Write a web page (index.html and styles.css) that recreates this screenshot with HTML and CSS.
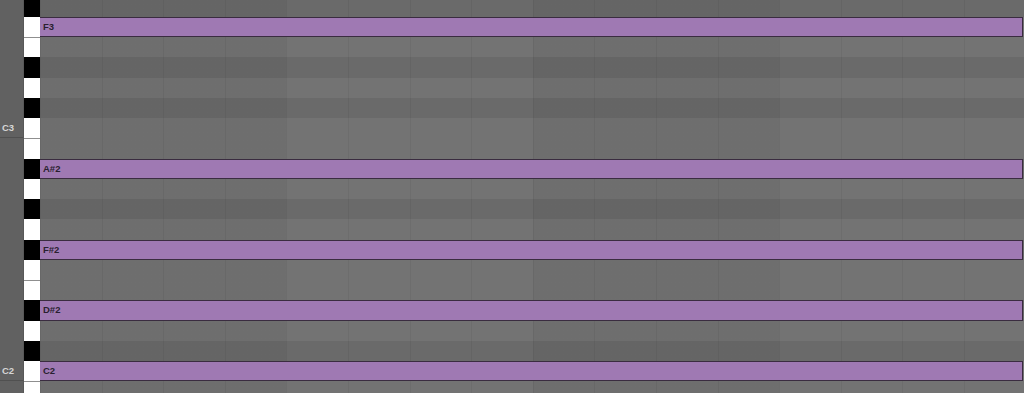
FILE: index.html
```html
<!DOCTYPE html>
<html>
<head>
<meta charset="utf-8">
<link rel="stylesheet" href="styles.css">
</head>
<body>
<div class="roll">
  <div class="labels">
    <div class="lrow"></div>
    <div class="lrow"></div>
    <div class="lrow"></div>
    <div class="lrow"></div>
    <div class="lrow"></div>
    <div class="lrow"></div>
    <div class="lrow oct">C3</div>
    <div class="lrow"></div>
    <div class="lrow"></div>
    <div class="lrow"></div>
    <div class="lrow"></div>
    <div class="lrow"></div>
    <div class="lrow"></div>
    <div class="lrow"></div>
    <div class="lrow"></div>
    <div class="lrow"></div>
    <div class="lrow"></div>
    <div class="lrow"></div>
    <div class="lrow oct">C2</div>
    <div class="lrow"></div>
  </div>
  <div class="keys">
    <div class="key black"></div>
    <div class="key white"></div>
    <div class="key white sep"></div>
    <div class="key black"></div>
    <div class="key white"></div>
    <div class="key black"></div>
    <div class="key white"></div>
    <div class="key white sep"></div>
    <div class="key black"></div>
    <div class="key white"></div>
    <div class="key black"></div>
    <div class="key white"></div>
    <div class="key black"></div>
    <div class="key white"></div>
    <div class="key white sep"></div>
    <div class="key black"></div>
    <div class="key white"></div>
    <div class="key black"></div>
    <div class="key white"></div>
    <div class="key white sep"></div>
  </div>
  <div class="grid">
    <div class="row dark"></div>
    <div class="row"><div class="note">F3</div></div>
    <div class="row"></div>
    <div class="row dark"></div>
    <div class="row"></div>
    <div class="row dark"></div>
    <div class="row"></div>
    <div class="row"></div>
    <div class="row dark"><div class="note">A#2</div></div>
    <div class="row"></div>
    <div class="row dark"></div>
    <div class="row"></div>
    <div class="row dark"><div class="note">F#2</div></div>
    <div class="row"></div>
    <div class="row"></div>
    <div class="row dark"><div class="note">D#2</div></div>
    <div class="row"></div>
    <div class="row dark"></div>
    <div class="row"><div class="note">C2</div></div>
    <div class="row"></div>
  </div>
</div>
</body>
</html>
```

FILE: styles.css
```css
html, body {
  margin: 0;
  padding: 0;
  background: #606060;
  overflow: hidden;
}
body {
  width: 1024px;
  height: 393px;
  font-family: "Liberation Sans", Arial, sans-serif;
}
.roll {
  display: flex;
  margin-top: -3.24px;
}
.labels {
  width: 23px;
  border-right: 1px solid #585858;
  background: #616161;
  display: flex;
  flex-direction: column;
}
.lrow {
  height: 20.235px;
  box-sizing: border-box;
}
.lrow.oct {
  border-bottom: 1px solid #505050;
  color: #d6d6d6;
  font-size: 9.5px;
  font-weight: bold;
  line-height: 20px;
  padding-left: 2px;
}
.keys {
  width: 16px;
  display: flex;
  flex-direction: column;
}
.key {
  height: 20.235px;
  box-sizing: border-box;
}
.key.black { background: #000; }
.key.white { background: #fff; }
.key.white.sep { border-top: 1px solid #8f8f8f; }
.grid {
  flex: 1;
  display: flex;
  flex-direction: column;
  background-color: #737373;
  background-image:
    repeating-linear-gradient(to right,
      rgba(0,0,0,0.05) 0, rgba(0,0,0,0.05) 1px,
      transparent 1px, transparent 61.6px),
    repeating-linear-gradient(to right,
      rgba(0,0,0,0.045) 0, rgba(0,0,0,0.045) 246.4px,
      transparent 246.4px, transparent 492.8px);
}
.row {
  height: 20.235px;
  box-sizing: border-box;
  display: flex;
}
.row.dark {
  background: rgba(0,0,0,0.075);
}
.note {
  flex: 1;
  box-sizing: border-box;
  background: #9f79b3;
  border: 1px solid #3a2c40;
  border-left: none;
  margin-right: 1px;
  color: #2a1f30;
  font-size: 9.5px;
  font-weight: bold;
  line-height: 18px;
  padding-left: 3px;
}
```
